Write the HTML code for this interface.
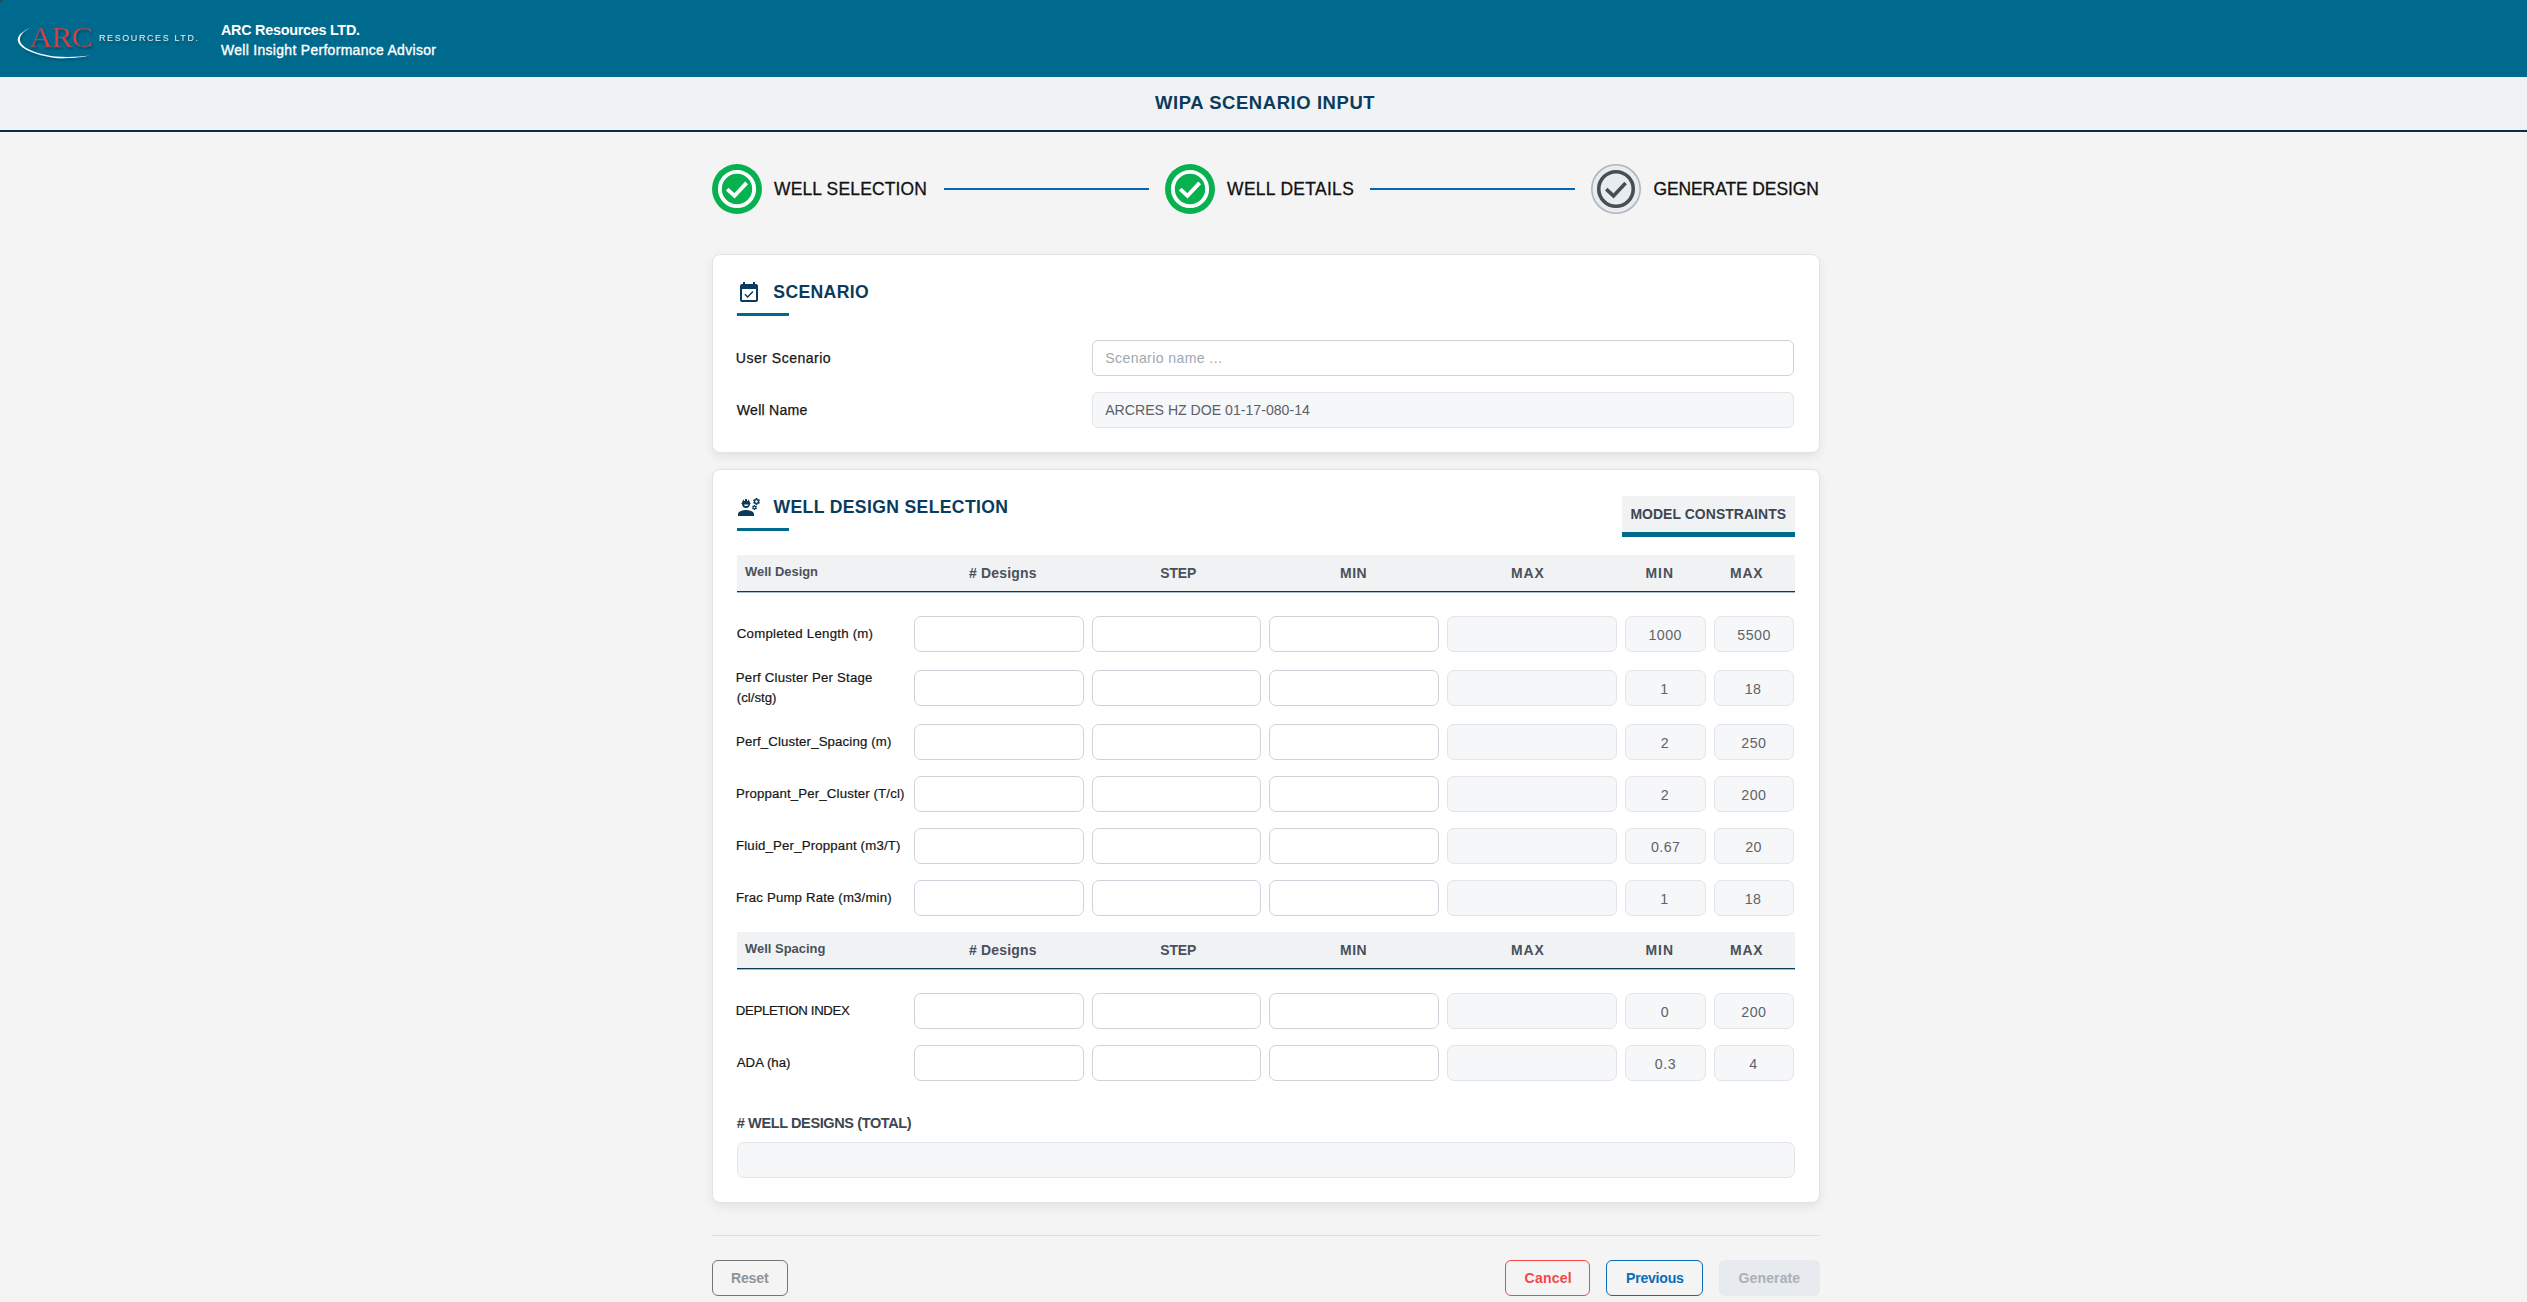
<!DOCTYPE html>
<html><head><meta charset="utf-8"><title>WIPA Scenario Input</title>
<style>
html,body{margin:0;padding:0;}
body{width:2527px;height:1302px;overflow:hidden;position:relative;background:#f4f4f4;font-family:"Liberation Sans",sans-serif;}
.t{position:absolute;white-space:nowrap;}
.a{position:absolute;box-sizing:border-box;}
</style></head><body>
<div class="a" style="left:0px;top:0px;width:2527px;height:77px;background:#006a8e;"></div>
<div class="a" style="left:0px;top:0px;width:4px;height:2px;background:linear-gradient(90deg,#3e3c3c,rgba(0,106,142,0));"></div>
<svg class="a" style="left:0;top:0" width="210" height="77" viewBox="0 0 210 77">
<defs><filter id="sh" x="-20%" y="-20%" width="140%" height="160%"><feGaussianBlur in="SourceAlpha" stdDeviation="1.2"/><feOffset dx="1" dy="2"/><feComponentTransfer><feFuncA type="linear" slope="0.28"/></feComponentTransfer><feMerge><feMergeNode/><feMergeNode in="SourceGraphic"/></feMerge></filter></defs>
<g filter="url(#sh)">
<path d="M31.4,27.3 C22,31.5 16.5,36 18,41.5 C20,48.5 33,54.5 55,57.9 C68,58.9 82,57.5 90.8,55.3 C80,57 68,57.3 55,56.5 C34,53.6 21.6,47.5 20.1,41 C18.9,36 23,31.5 31.4,27.3 Z" fill="#fff"/>
<text transform="translate(29.4,47.1) scale(1.1,1)" x="0" y="0" font-family="Liberation Serif" font-size="29" fill="#e83a3a" stroke="#006a8e" stroke-width="0.45" letter-spacing="-0.9">ARC</text>
<text x="99" y="41" font-family="Liberation Sans" font-size="8.3" fill="#e9f0f4" letter-spacing="1.5" transform="translate(99,0) scale(1.08,1) translate(-99,0)">RESOURCES LTD.</text>
</g></svg>
<div class="a" style="left:0px;top:77px;width:2527px;height:53px;background:#f1f2f4;"></div>
<div class="a" style="left:0px;top:130px;width:2527px;height:2px;background:#0b2d4b;"></div>
<svg class="a" style="left:712px;top:164px" width="50" height="50" viewBox="0 0 50 50"><circle cx="25" cy="25" r="25" fill="#08b14f"/><circle cx="25" cy="25" r="17.15" fill="none" stroke="#fff" stroke-width="3.9"/><polyline points="15.2,25.1 22.5,31.9 34.6,18.9" fill="none" stroke="#fff" stroke-width="3.8"/></svg>
<svg class="a" style="left:1165px;top:164px" width="50" height="50" viewBox="0 0 50 50"><circle cx="25" cy="25" r="25" fill="#08b14f"/><circle cx="25" cy="25" r="17.15" fill="none" stroke="#fff" stroke-width="3.9"/><polyline points="15.2,25.1 22.5,31.9 34.6,18.9" fill="none" stroke="#fff" stroke-width="3.8"/></svg>
<svg class="a" style="left:1591px;top:164px" width="50" height="50" viewBox="0 0 50 50"><circle cx="25" cy="25" r="24.2" fill="#e9ecef" stroke="#b0b5bb" stroke-width="1.6"/><circle cx="25" cy="25" r="17.25" fill="none" stroke="#474d55" stroke-width="3.6"/><polyline points="15.2,25.1 22.5,31.9 34.6,18.9" fill="none" stroke="#474d55" stroke-width="3.6"/></svg>
<div class="a" style="left:944px;top:188px;width:205px;height:2px;background:#0366b4;"></div>
<div class="a" style="left:1370px;top:188px;width:205px;height:2px;background:#0366b4;"></div>
<div class="a" style="left:712px;top:254px;width:1108px;height:199px;background:#fff;border:1px solid #e0e3e7;border-radius:8px;box-shadow:0 4px 10px rgba(0,0,0,0.07);"></div>
<div class="a" style="left:712px;top:469px;width:1108px;height:734px;background:#fff;border:1px solid #e0e3e7;border-radius:8px;box-shadow:0 4px 10px rgba(0,0,0,0.07);"></div>
<svg class="a" style="left:737px;top:281px" width="24" height="24" viewBox="0 0 24 24"><path d="M16.53 11.06L15.47 10l-4.88 4.88-2.12-2.12-1.06 1.06L10.59 17l5.94-5.94zM19 3h-1V1h-2v2H8V1H6v2H5c-1.11 0-1.99.9-1.99 2L3 19c0 1.1.89 2 2 2h14c1.1 0 2-.9 2-2V5c0-1.1-.9-2-2-2zm0 16H5V8h14v11z" fill="#0a3b5c"/></svg>
<div class="a" style="left:737px;top:313px;width:52px;height:3px;background:#006a8e;"></div>
<div class="a" style="left:1092px;top:340px;width:702px;height:36px;background:#fff;border:1px solid #ccd3db;border-radius:6px;"></div>
<div class="a" style="left:1092px;top:392px;width:702px;height:36px;background:#f6f7f9;border:1px solid #e1e5ea;border-radius:6px;"></div>
<svg class="a" style="left:737px;top:495px" width="24" height="24" viewBox="0 0 24 24"><path d="M9 15c-2.67 0-8 1.34-8 4v2h16v-2c0-2.66-5.33-4-8-4zm13.1-8.16c.01-.11.02-.22.02-.34 0-.12-.01-.23-.03-.34l.74-.58c.07-.05.08-.15.04-.22l-.7-1.21c-.04-.08-.14-.1-.21-.08l-.86.35c-.18-.14-.38-.25-.59-.34l-.13-.93c-.02-.09-.09-.15-.18-.15h-1.4c-.09 0-.16.06-.17.15l-.13.93c-.21.09-.41.21-.59.34l-.87-.35c-.08-.03-.17 0-.21.08l-.7 1.21c-.04.08-.03.17.04.22l.74.58c-.02.11-.03.23-.03.34 0 .11.01.23.03.34l-.74.58c-.07.05-.08.15-.04.22l.7 1.21c.04.08.14.1.21.08l.87-.35c.18.14.38.25.59.34l.13.93c.01.09.08.15.17.15h1.4c.09 0 .16-.06.17-.15l.13-.93c.21-.09.41-.21.59-.34l.87.35c.08.03.17 0 .21-.08l.7-1.21c.04-.08.03-.17-.04-.22l-.73-.58zm-2.6.91c-.69 0-1.25-.56-1.25-1.25s.56-1.25 1.25-1.25 1.25.56 1.25 1.25-.56 1.25-1.25 1.25zm.42 3.93-.5-.87c-.03-.06-.1-.08-.15-.06l-.62.25c-.13-.1-.27-.18-.42-.24l-.09-.66c-.01-.06-.06-.1-.12-.1h-1c-.06 0-.11.04-.12.11l-.09.66c-.15.06-.29.15-.42.24l-.62-.25c-.06-.02-.12 0-.15.06l-.5.87c-.03.06-.02.12.03.16l.53.41c-.01.08-.02.16-.02.24 0 .08.01.17.02.24l-.53.41c-.05.04-.06.11-.03.16l.5.87c.03.06.1.08.15.06l.62-.25c.13.1.27.18.42.24l.09.66c.01.07.06.11.12.11h1c.06 0 .11-.04.12-.11l.09-.66c.15-.06.29-.15.42-.24l.62.25c.06.02.12 0 .15-.06l.5-.87c.03-.06.02-.12-.03-.16l-.52-.41c.01-.08.02-.16.02-.24 0-.08-.01-.17-.02-.24l.53-.41c.05-.04.06-.11.04-.17zm-2.42 1.65c-.46 0-.83-.38-.83-.83 0-.46.38-.83.83-.83s.83.38.83.83c0 .46-.37.83-.83.83zM4.74 9h8.53c.27 0 .49-.22.49-.49v-.02c0-.27-.22-.49-.49-.49H13c0-1.48-.81-2.75-2-3.45v.95c0 .28-.22.5-.5.5s-.5-.22-.5-.5V4.14C9.68 4.06 9.35 4 9 4s-.68.06-1 .14V5.5c0 .28-.22.5-.5.5S7 5.78 7 5.5v-.95C5.81 5.25 5 6.52 5 8h-.26c-.27 0-.49.22-.49.49v.03c0 .26.22.48.49.48zM4.95 9H13.05C12.95 11.3 11.2 13.05 9 13.05C6.8 13.05 5.05 11.3 4.95 9zM7.05 9.5H11.35C11.2 10.5 10.3 11.1 9.2 11.1C8.1 11.1 7.2 10.5 7.05 9.5z" fill="#0a3b5c" fill-rule="evenodd"/></svg>
<div class="a" style="left:737px;top:528px;width:52px;height:3px;background:#006a8e;"></div>
<div class="a" style="left:1622px;top:496px;width:173px;height:37px;background:#f1f2f4;"></div>
<div class="a" style="left:1622px;top:532px;width:173px;height:5px;background:#006a8e;"></div>
<div class="a" style="left:737px;top:555px;width:1058px;height:36px;background:#f1f2f4;"></div>
<div class="a" style="left:737px;top:591px;width:1058px;height:1px;background:#0b3a5c;"></div>
<div class="a" style="left:737px;top:592px;width:1058px;height:1px;background:rgba(11,58,92,0.35);"></div>
<div class="a" style="left:737px;top:932px;width:1058px;height:36px;background:#f1f2f4;"></div>
<div class="a" style="left:737px;top:968px;width:1058px;height:1px;background:#0b3a5c;"></div>
<div class="a" style="left:737px;top:969px;width:1058px;height:1px;background:rgba(11,58,92,0.35);"></div>
<div class="a" style="left:914px;top:616px;width:170px;height:36px;background:#fff;border:1px solid #cdd3da;border-radius:7px;"></div>
<div class="a" style="left:1092px;top:616px;width:169px;height:36px;background:#fff;border:1px solid #cdd3da;border-radius:7px;"></div>
<div class="a" style="left:1269px;top:616px;width:170px;height:36px;background:#fff;border:1px solid #cdd3da;border-radius:7px;"></div>
<div class="a" style="left:1447px;top:616px;width:170px;height:36px;background:#f6f7f9;border:1px solid #e1e4e9;border-radius:7px;"></div>
<div class="a" style="left:1625px;top:616px;width:81px;height:36px;background:#f6f7f9;border:1px solid #e1e4e9;border-radius:7px;"></div>
<div class="a" style="left:1714px;top:616px;width:80px;height:36px;background:#f6f7f9;border:1px solid #e1e4e9;border-radius:7px;"></div>
<div class="a" style="left:914px;top:670px;width:170px;height:36px;background:#fff;border:1px solid #cdd3da;border-radius:7px;"></div>
<div class="a" style="left:1092px;top:670px;width:169px;height:36px;background:#fff;border:1px solid #cdd3da;border-radius:7px;"></div>
<div class="a" style="left:1269px;top:670px;width:170px;height:36px;background:#fff;border:1px solid #cdd3da;border-radius:7px;"></div>
<div class="a" style="left:1447px;top:670px;width:170px;height:36px;background:#f6f7f9;border:1px solid #e1e4e9;border-radius:7px;"></div>
<div class="a" style="left:1625px;top:670px;width:81px;height:36px;background:#f6f7f9;border:1px solid #e1e4e9;border-radius:7px;"></div>
<div class="a" style="left:1714px;top:670px;width:80px;height:36px;background:#f6f7f9;border:1px solid #e1e4e9;border-radius:7px;"></div>
<div class="a" style="left:914px;top:724px;width:170px;height:36px;background:#fff;border:1px solid #cdd3da;border-radius:7px;"></div>
<div class="a" style="left:1092px;top:724px;width:169px;height:36px;background:#fff;border:1px solid #cdd3da;border-radius:7px;"></div>
<div class="a" style="left:1269px;top:724px;width:170px;height:36px;background:#fff;border:1px solid #cdd3da;border-radius:7px;"></div>
<div class="a" style="left:1447px;top:724px;width:170px;height:36px;background:#f6f7f9;border:1px solid #e1e4e9;border-radius:7px;"></div>
<div class="a" style="left:1625px;top:724px;width:81px;height:36px;background:#f6f7f9;border:1px solid #e1e4e9;border-radius:7px;"></div>
<div class="a" style="left:1714px;top:724px;width:80px;height:36px;background:#f6f7f9;border:1px solid #e1e4e9;border-radius:7px;"></div>
<div class="a" style="left:914px;top:776px;width:170px;height:36px;background:#fff;border:1px solid #cdd3da;border-radius:7px;"></div>
<div class="a" style="left:1092px;top:776px;width:169px;height:36px;background:#fff;border:1px solid #cdd3da;border-radius:7px;"></div>
<div class="a" style="left:1269px;top:776px;width:170px;height:36px;background:#fff;border:1px solid #cdd3da;border-radius:7px;"></div>
<div class="a" style="left:1447px;top:776px;width:170px;height:36px;background:#f6f7f9;border:1px solid #e1e4e9;border-radius:7px;"></div>
<div class="a" style="left:1625px;top:776px;width:81px;height:36px;background:#f6f7f9;border:1px solid #e1e4e9;border-radius:7px;"></div>
<div class="a" style="left:1714px;top:776px;width:80px;height:36px;background:#f6f7f9;border:1px solid #e1e4e9;border-radius:7px;"></div>
<div class="a" style="left:914px;top:828px;width:170px;height:36px;background:#fff;border:1px solid #cdd3da;border-radius:7px;"></div>
<div class="a" style="left:1092px;top:828px;width:169px;height:36px;background:#fff;border:1px solid #cdd3da;border-radius:7px;"></div>
<div class="a" style="left:1269px;top:828px;width:170px;height:36px;background:#fff;border:1px solid #cdd3da;border-radius:7px;"></div>
<div class="a" style="left:1447px;top:828px;width:170px;height:36px;background:#f6f7f9;border:1px solid #e1e4e9;border-radius:7px;"></div>
<div class="a" style="left:1625px;top:828px;width:81px;height:36px;background:#f6f7f9;border:1px solid #e1e4e9;border-radius:7px;"></div>
<div class="a" style="left:1714px;top:828px;width:80px;height:36px;background:#f6f7f9;border:1px solid #e1e4e9;border-radius:7px;"></div>
<div class="a" style="left:914px;top:880px;width:170px;height:36px;background:#fff;border:1px solid #cdd3da;border-radius:7px;"></div>
<div class="a" style="left:1092px;top:880px;width:169px;height:36px;background:#fff;border:1px solid #cdd3da;border-radius:7px;"></div>
<div class="a" style="left:1269px;top:880px;width:170px;height:36px;background:#fff;border:1px solid #cdd3da;border-radius:7px;"></div>
<div class="a" style="left:1447px;top:880px;width:170px;height:36px;background:#f6f7f9;border:1px solid #e1e4e9;border-radius:7px;"></div>
<div class="a" style="left:1625px;top:880px;width:81px;height:36px;background:#f6f7f9;border:1px solid #e1e4e9;border-radius:7px;"></div>
<div class="a" style="left:1714px;top:880px;width:80px;height:36px;background:#f6f7f9;border:1px solid #e1e4e9;border-radius:7px;"></div>
<div class="a" style="left:914px;top:993px;width:170px;height:36px;background:#fff;border:1px solid #cdd3da;border-radius:7px;"></div>
<div class="a" style="left:1092px;top:993px;width:169px;height:36px;background:#fff;border:1px solid #cdd3da;border-radius:7px;"></div>
<div class="a" style="left:1269px;top:993px;width:170px;height:36px;background:#fff;border:1px solid #cdd3da;border-radius:7px;"></div>
<div class="a" style="left:1447px;top:993px;width:170px;height:36px;background:#f6f7f9;border:1px solid #e1e4e9;border-radius:7px;"></div>
<div class="a" style="left:1625px;top:993px;width:81px;height:36px;background:#f6f7f9;border:1px solid #e1e4e9;border-radius:7px;"></div>
<div class="a" style="left:1714px;top:993px;width:80px;height:36px;background:#f6f7f9;border:1px solid #e1e4e9;border-radius:7px;"></div>
<div class="a" style="left:914px;top:1045px;width:170px;height:36px;background:#fff;border:1px solid #cdd3da;border-radius:7px;"></div>
<div class="a" style="left:1092px;top:1045px;width:169px;height:36px;background:#fff;border:1px solid #cdd3da;border-radius:7px;"></div>
<div class="a" style="left:1269px;top:1045px;width:170px;height:36px;background:#fff;border:1px solid #cdd3da;border-radius:7px;"></div>
<div class="a" style="left:1447px;top:1045px;width:170px;height:36px;background:#f6f7f9;border:1px solid #e1e4e9;border-radius:7px;"></div>
<div class="a" style="left:1625px;top:1045px;width:81px;height:36px;background:#f6f7f9;border:1px solid #e1e4e9;border-radius:7px;"></div>
<div class="a" style="left:1714px;top:1045px;width:80px;height:36px;background:#f6f7f9;border:1px solid #e1e4e9;border-radius:7px;"></div>
<div class="a" style="left:737px;top:1142px;width:1058px;height:36px;background:#f6f7f9;border:1px solid #e1e4e9;border-radius:7px;"></div>
<div class="a" style="left:712px;top:1235px;width:1108px;height:1px;background:#dde1e6;"></div>
<div class="a" style="left:712px;top:1260px;width:76px;height:36px;border:1px solid #6f767d;border-radius:6px;"></div>
<div class="a" style="left:1505px;top:1260px;width:85px;height:36px;border:1px solid #f2484a;border-radius:6px;"></div>
<div class="a" style="left:1606px;top:1260px;width:97px;height:36px;border:1px solid #0a6bb6;border-radius:6px;"></div>
<div class="a" style="left:1719px;top:1260px;width:101px;height:36px;background:#e7eaee;border-radius:6px;"></div>
<div class="t" style="left:221.00px;top:22.00px;font-size:14.39px;line-height:16px;font-weight:bold;color:#fff;letter-spacing:-0.266px;">ARC Resources LTD.</div>
<div class="t" style="left:221.00px;top:42.00px;font-size:13.95px;line-height:16px;font-weight:normal;color:#fff;letter-spacing:0.318px;-webkit-text-stroke:0.35px #fff;">Well Insight Performance Advisor</div>
<div class="t" style="left:1155.00px;top:92.00px;font-size:18.46px;line-height:21px;font-weight:bold;color:#0a3b5c;letter-spacing:0.590px;">WIPA SCENARIO INPUT</div>
<div class="t" style="left:774.00px;top:179.00px;font-size:17.44px;line-height:20px;font-weight:normal;color:#111;letter-spacing:0.187px;-webkit-text-stroke:0.3px #111;">WELL SELECTION</div>
<div class="t" style="left:1227.10px;top:179.00px;font-size:17.44px;line-height:20px;font-weight:normal;color:#111;letter-spacing:0.329px;-webkit-text-stroke:0.3px #111;">WELL DETAILS</div>
<div class="t" style="left:1653.50px;top:179.00px;font-size:17.44px;line-height:20px;font-weight:normal;color:#111;letter-spacing:-0.074px;-webkit-text-stroke:0.3px #111;">GENERATE DESIGN</div>
<div class="t" style="left:773.30px;top:282.00px;font-size:17.59px;line-height:20px;font-weight:bold;color:#0a3b5c;letter-spacing:0.370px;">SCENARIO</div>
<div class="t" style="left:735.80px;top:350.00px;font-size:14.1px;line-height:16px;font-weight:normal;color:#161616;letter-spacing:0.462px;-webkit-text-stroke:0.25px #161616;">User Scenario</div>
<div class="t" style="left:736.80px;top:402.00px;font-size:14.1px;line-height:16px;font-weight:normal;color:#161616;letter-spacing:0.247px;-webkit-text-stroke:0.25px #161616;">Well Name</div>
<div class="t" style="left:1105.20px;top:350.00px;font-size:14.1px;line-height:16px;font-weight:normal;color:#9ea8b3;letter-spacing:0.391px;">Scenario name ...</div>
<div class="t" style="left:1105.20px;top:402.00px;font-size:14.1px;line-height:16px;font-weight:normal;color:#5b6067;letter-spacing:0.008px;">ARCRES HZ DOE 01-17-080-14</div>
<div class="t" style="left:773.60px;top:497.00px;font-size:17.59px;line-height:20px;font-weight:bold;color:#0a3b5c;letter-spacing:0.357px;">WELL DESIGN SELECTION</div>
<div class="t" style="left:1630.40px;top:506.00px;font-size:13.95px;line-height:16px;font-weight:bold;color:#3d4751;letter-spacing:0.065px;">MODEL CONSTRAINTS</div>
<div class="t" style="left:745.10px;top:564.00px;font-size:12.94px;line-height:15px;font-weight:bold;color:#48515b;letter-spacing:-0.019px;">Well Design</div>
<div class="t" style="left:969.00px;top:565.00px;font-size:13.95px;line-height:16px;font-weight:bold;color:#48515b;letter-spacing:0.201px;"># Designs</div>
<div class="t" style="left:1160.30px;top:565.00px;font-size:13.95px;line-height:16px;font-weight:bold;color:#48515b;letter-spacing:-0.135px;">STEP</div>
<div class="t" style="left:1340.00px;top:565.00px;font-size:13.95px;line-height:16px;font-weight:bold;color:#48515b;letter-spacing:0.559px;">MIN</div>
<div class="t" style="left:1511.10px;top:565.00px;font-size:13.95px;line-height:16px;font-weight:bold;color:#48515b;letter-spacing:0.812px;">MAX</div>
<div class="t" style="left:1645.60px;top:565.00px;font-size:13.95px;line-height:16px;font-weight:bold;color:#48515b;letter-spacing:0.909px;">MIN</div>
<div class="t" style="left:1730.10px;top:565.00px;font-size:13.95px;line-height:16px;font-weight:bold;color:#48515b;letter-spacing:0.712px;">MAX</div>
<div class="t" style="left:745.10px;top:941.00px;font-size:12.94px;line-height:15px;font-weight:bold;color:#48515b;letter-spacing:-0.007px;">Well Spacing</div>
<div class="t" style="left:969.00px;top:942.00px;font-size:13.95px;line-height:16px;font-weight:bold;color:#48515b;letter-spacing:0.201px;"># Designs</div>
<div class="t" style="left:1160.30px;top:942.00px;font-size:13.95px;line-height:16px;font-weight:bold;color:#48515b;letter-spacing:-0.135px;">STEP</div>
<div class="t" style="left:1340.00px;top:942.00px;font-size:13.95px;line-height:16px;font-weight:bold;color:#48515b;letter-spacing:0.559px;">MIN</div>
<div class="t" style="left:1511.10px;top:942.00px;font-size:13.95px;line-height:16px;font-weight:bold;color:#48515b;letter-spacing:0.812px;">MAX</div>
<div class="t" style="left:1645.60px;top:942.00px;font-size:13.95px;line-height:16px;font-weight:bold;color:#48515b;letter-spacing:0.909px;">MIN</div>
<div class="t" style="left:1730.10px;top:942.00px;font-size:13.95px;line-height:16px;font-weight:bold;color:#48515b;letter-spacing:0.712px;">MAX</div>
<div class="t" style="left:736.80px;top:626.00px;font-size:13.23px;line-height:15px;font-weight:normal;color:#161616;letter-spacing:0.247px;-webkit-text-stroke:0.2px #161616;">Completed Length (m)</div>
<div class="t" style="left:735.80px;top:670.00px;font-size:13.23px;line-height:15px;font-weight:normal;color:#161616;letter-spacing:0.205px;-webkit-text-stroke:0.2px #161616;">Perf Cluster Per Stage</div>
<div class="t" style="left:736.80px;top:690.00px;font-size:13.23px;line-height:15px;font-weight:normal;color:#161616;-webkit-text-stroke:0.2px #161616;">(cl/stg)</div>
<div class="t" style="left:736.00px;top:734.00px;font-size:13.23px;line-height:15px;font-weight:normal;color:#161616;letter-spacing:0.140px;-webkit-text-stroke:0.2px #161616;">Perf_Cluster_Spacing (m)</div>
<div class="t" style="left:736.00px;top:786.00px;font-size:13.23px;line-height:15px;font-weight:normal;color:#161616;letter-spacing:0.148px;-webkit-text-stroke:0.2px #161616;">Proppant_Per_Cluster (T/cl)</div>
<div class="t" style="left:736.00px;top:838.00px;font-size:13.23px;line-height:15px;font-weight:normal;color:#161616;letter-spacing:0.177px;-webkit-text-stroke:0.2px #161616;">Fluid_Per_Proppant (m3/T)</div>
<div class="t" style="left:736.00px;top:890.00px;font-size:13.23px;line-height:15px;font-weight:normal;color:#161616;letter-spacing:0.162px;-webkit-text-stroke:0.2px #161616;">Frac Pump Rate (m3/min)</div>
<div class="t" style="left:735.80px;top:1003.00px;font-size:13.23px;line-height:15px;font-weight:normal;color:#161616;letter-spacing:-0.356px;-webkit-text-stroke:0.2px #161616;">DEPLETION INDEX</div>
<div class="t" style="left:736.80px;top:1055.00px;font-size:13.23px;line-height:15px;font-weight:normal;color:#161616;-webkit-text-stroke:0.2px #161616;">ADA (ha)</div>
<div class="t" style="left:736.80px;top:1115.00px;font-size:14.54px;line-height:16px;font-weight:bold;color:#3d4751;letter-spacing:-0.404px;"># WELL DESIGNS (TOTAL)</div>
<div class="t" style="left:1648.43px;top:627.00px;font-size:14.24px;line-height:16px;font-weight:normal;color:#5f6368;letter-spacing:0.45px;">1000</div>
<div class="t" style="left:1737.33px;top:627.00px;font-size:14.24px;line-height:16px;font-weight:normal;color:#5f6368;letter-spacing:0.45px;">5500</div>
<div class="t" style="left:1660.30px;top:681.00px;font-size:14.24px;line-height:16px;font-weight:normal;color:#5f6368;letter-spacing:0.45px;">1</div>
<div class="t" style="left:1744.74px;top:681.00px;font-size:14.24px;line-height:16px;font-weight:normal;color:#5f6368;letter-spacing:0.45px;">18</div>
<div class="t" style="left:1660.80px;top:735.00px;font-size:14.24px;line-height:16px;font-weight:normal;color:#5f6368;letter-spacing:0.45px;">2</div>
<div class="t" style="left:1741.28px;top:735.00px;font-size:14.24px;line-height:16px;font-weight:normal;color:#5f6368;letter-spacing:0.45px;">250</div>
<div class="t" style="left:1660.80px;top:787.00px;font-size:14.24px;line-height:16px;font-weight:normal;color:#5f6368;letter-spacing:0.45px;">2</div>
<div class="t" style="left:1741.28px;top:787.00px;font-size:14.24px;line-height:16px;font-weight:normal;color:#5f6368;letter-spacing:0.45px;">200</div>
<div class="t" style="left:1650.91px;top:839.00px;font-size:14.24px;line-height:16px;font-weight:normal;color:#5f6368;letter-spacing:0.45px;">0.67</div>
<div class="t" style="left:1745.24px;top:839.00px;font-size:14.24px;line-height:16px;font-weight:normal;color:#5f6368;letter-spacing:0.45px;">20</div>
<div class="t" style="left:1660.30px;top:891.00px;font-size:14.24px;line-height:16px;font-weight:normal;color:#5f6368;letter-spacing:0.45px;">1</div>
<div class="t" style="left:1744.74px;top:891.00px;font-size:14.24px;line-height:16px;font-weight:normal;color:#5f6368;letter-spacing:0.45px;">18</div>
<div class="t" style="left:1660.80px;top:1004.00px;font-size:14.24px;line-height:16px;font-weight:normal;color:#5f6368;letter-spacing:0.45px;">0</div>
<div class="t" style="left:1741.28px;top:1004.00px;font-size:14.24px;line-height:16px;font-weight:normal;color:#5f6368;letter-spacing:0.45px;">200</div>
<div class="t" style="left:1654.86px;top:1056.00px;font-size:14.24px;line-height:16px;font-weight:normal;color:#5f6368;letter-spacing:0.45px;">0.3</div>
<div class="t" style="left:1749.20px;top:1056.00px;font-size:14.24px;line-height:16px;font-weight:normal;color:#5f6368;letter-spacing:0.45px;">4</div>
<div class="t" style="left:730.90px;top:1270.00px;font-size:14.1px;line-height:16px;font-weight:bold;color:#8d949b;letter-spacing:-0.173px;">Reset</div>
<div class="t" style="left:1524.60px;top:1270.00px;font-size:14.1px;line-height:16px;font-weight:bold;color:#f2484a;letter-spacing:0.160px;">Cancel</div>
<div class="t" style="left:1626.00px;top:1270.00px;font-size:14.1px;line-height:16px;font-weight:bold;color:#0a6bb6;letter-spacing:-0.242px;">Previous</div>
<div class="t" style="left:1738.60px;top:1270.00px;font-size:14.1px;line-height:16px;font-weight:bold;color:#a9b1ba;letter-spacing:0.062px;">Generate</div>
</body></html>
